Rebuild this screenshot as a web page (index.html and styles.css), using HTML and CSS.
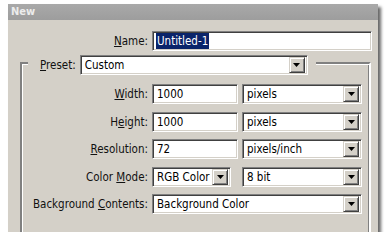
FILE: index.html
```html
<!DOCTYPE html>
<html>
<head>
<meta charset="utf-8">
<link rel="stylesheet" href="styles.css">
</head>
<body>
<div class="window">
  <div class="titlebar">New</div>
  <div class="content">
    <div class="name-row">
      <label class="lbl"><u>N</u>ame:</label>
      <div class="field"><span class="sel">Untitled-1</span></div>
    </div>
    <div class="group">
      <div class="preset-row">
        <label class="lbl"><u>P</u>reset:</label>
        <div class="field select preset-select"><span class="val">Custom</span><span class="btn"><svg width="7" height="4" viewBox="0 0 7 4"><path d="M0 0h7L3.5 4z" fill="#000"/></svg></span></div>
      </div>
      <div class="grid">
        <label class="lbl"><u>W</u>idth:</label>
        <div class="field"><span class="val">1000</span></div>
        <div class="field select"><span class="val">pixels</span><span class="btn"><svg width="7" height="4" viewBox="0 0 7 4"><path d="M0 0h7L3.5 4z" fill="#000"/></svg></span></div>

        <label class="lbl">H<u>e</u>ight:</label>
        <div class="field"><span class="val">1000</span></div>
        <div class="field select"><span class="val">pixels</span><span class="btn"><svg width="7" height="4" viewBox="0 0 7 4"><path d="M0 0h7L3.5 4z" fill="#000"/></svg></span></div>

        <label class="lbl"><u>R</u>esolution:</label>
        <div class="field"><span class="val">72</span></div>
        <div class="field select"><span class="val">pixels/inch</span><span class="btn"><svg width="7" height="4" viewBox="0 0 7 4"><path d="M0 0h7L3.5 4z" fill="#000"/></svg></span></div>

        <label class="lbl">Color <u>M</u>ode:</label>
        <div class="field select narrow"><span class="val">RGB Color</span><span class="btn"><svg width="7" height="4" viewBox="0 0 7 4"><path d="M0 0h7L3.5 4z" fill="#000"/></svg></span></div>
        <div class="field select"><span class="val">8 bit</span><span class="btn"><svg width="7" height="4" viewBox="0 0 7 4"><path d="M0 0h7L3.5 4z" fill="#000"/></svg></span></div>

        <label class="lbl">Background <u>C</u>ontents:</label>
        <div class="field select span2"><span class="val">Background Color</span><span class="btn"><svg width="7" height="4" viewBox="0 0 7 4"><path d="M0 0h7L3.5 4z" fill="#000"/></svg></span></div>
      </div>
    </div>
  </div>
</div>
</body>
</html>
```
FILE: styles.css
```css
html, body {
  margin: 0;
  background: #fff;
}
body {
  padding: 4px 0 0 8px;
  font-family: "DejaVu Sans Condensed", "DejaVu Sans", sans-serif;
  font-size: 11.5px;
  color: #000;
}
.window {
  width: 370px;
  height: 228px;
  background: #d4d0c8;
  box-shadow: 3px 3px 3px rgba(0, 0, 0, 0.6);
  overflow: hidden;
}
.titlebar {
  height: 16px;
  line-height: 16px;
  padding-left: 3px;
  background: linear-gradient(#a9a9a9, #9d9d9d);
  color: #ececec;
  font-weight: bold;
  font-size: 11px;
}
.content {
  padding: 11px 0 0 12px;
}
.lbl {
  text-align: right;
  white-space: nowrap;
  color: #111;
}
.name-row {
  display: grid;
  grid-template-columns: 128px 220px;
  column-gap: 4px;
  align-items: center;
}
.field {
  box-sizing: border-box;
  height: 20px;
  background: #fff;
  border: 1px solid;
  border-color: #808080 #ffffff #ffffff #808080;
  box-shadow: inset 1px 1px #404040, inset -1px -1px #d4d0c8;
  display: flex;
  align-items: center;
  padding-left: 4px;
  white-space: nowrap;
  overflow: hidden;
}
.sel {
  background: #0a246a;
  color: #fff;
  padding: 1px 1px;
  line-height: 14px;
  margin-left: -1px;
}
.val {
  flex: 1;
}
.select {
  padding-right: 2px;
}
.btn {
  box-sizing: border-box;
  width: 16px;
  height: 16px;
  background: #d4d0c8;
  border: 1px solid;
  border-color: #d4d0c8 #404040 #404040 #d4d0c8;
  box-shadow: inset 1px 1px #fff, inset -1px -1px #808080;
  display: flex;
  align-items: center;
  justify-content: center;
}
.group {
  margin-top: 11px;
  width: 351px;
  height: 200px;
  box-sizing: border-box;
  border: 2px solid;
  border-color: #808080 #ffffff #ffffff #808080;
  box-shadow: inset 1px 1px #fff, inset -1px -1px #808080;
}
.preset-row {
  display: flex;
  align-items: center;
  gap: 4px;
  margin: -9px 0 0 6px;
  padding: 0 8px 0 12px;
  width: fit-content;
  background: #d4d0c8;
}
.preset-select {
  width: 228px;
}
.grid {
  margin-top: 9px;
  display: grid;
  grid-template-columns: 126px 86px 120px;
  column-gap: 4px;
  row-gap: 7.5px;
  align-items: center;
}
.narrow {
  width: 79px;
}
.span2 {
  grid-column: 2 / span 2;
}
```
